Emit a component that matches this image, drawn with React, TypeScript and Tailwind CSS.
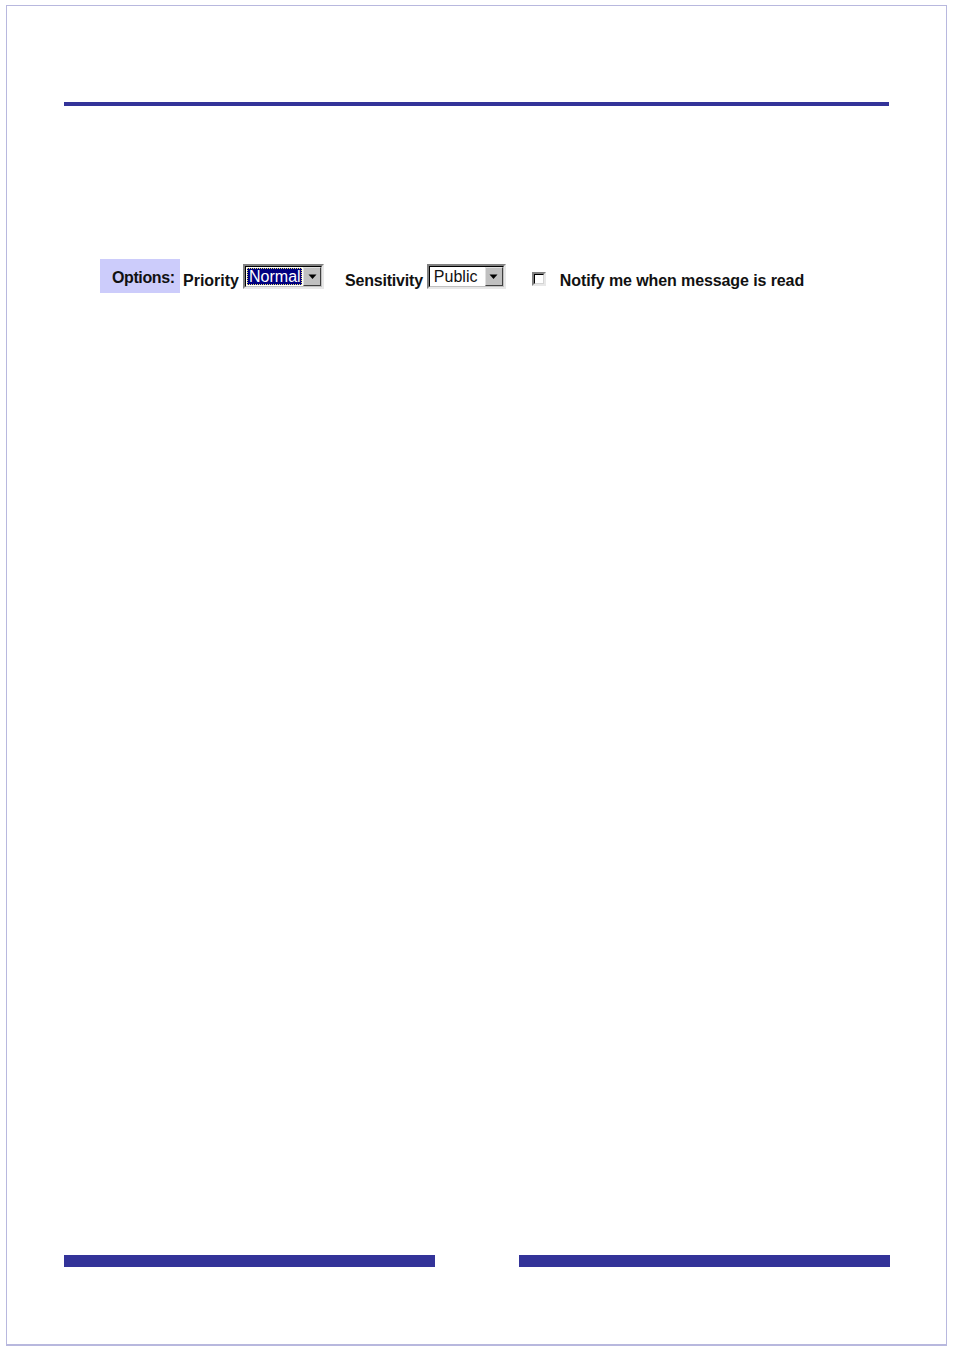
import React from 'react';

function DropButton() {
  return (
    <div className="flex h-full w-[18px] items-center justify-center border border-t-[#e0e0e0] border-l-[#e0e0e0] border-b-[#404040] border-r-[#404040] bg-[#c0c0c0]">
      <svg width="9" height="6" viewBox="0 0 9 6">
        <path d="M0.5 0.5h8L4.5 5z" fill="#000" />
      </svg>
    </div>
  );
}

function FakeSelect({ value, width, focused }: { value: string; width: string; focused?: boolean }) {
  return (
    <div
      className={`flex h-[25px] ${width} items-stretch border-2 border-t-[#808080] border-l-[#808080] border-b-[#e8e8e8] border-r-[#e8e8e8] font-normal`}
    >
      <div className="flex flex-1 items-stretch border border-t-[#000] border-l-[#000] border-b-[#c0c0c0] border-r-[#c0c0c0] bg-white">
        <div className="flex flex-1 items-stretch p-[1px]">
          {focused ? (
            <span className="flex flex-1 items-center border border-dotted border-[#e8e070] bg-[#000080] pl-[1px] text-[16px] leading-none text-white">
              {value}
            </span>
          ) : (
            <span className="flex items-center pl-[3px] text-[16px] leading-none text-[#111]">{value}</span>
          )}
        </div>
        <DropButton />
      </div>
    </div>
  );
}

export default function App() {
  return (
    <div className="min-h-[1351px] bg-white pt-[5px] pl-[6px]" style={{ fontFamily: '"Liberation Sans", Arial, sans-serif' }}>
      <div className="flex h-[1341px] w-[941px] flex-col border border-b-2 border-[#b8b8de]">
        <div className="ml-[57px] mt-[96px] h-[4px] w-[825px] bg-[#333399]" />

        <div className="ml-[93px] mt-[153px] flex items-start text-[16px] leading-[16px] font-bold text-[#111]">
          <div className="h-[34px] w-[80px] bg-[#ccccfb] pl-[12px] pt-[11px] tracking-[-0.4px]">Options:</div>
          <span className="ml-[3px] mt-[14px]">Priority</span>
          <div className="ml-[4px] mt-[5px]">
            <FakeSelect value="Normal" width="w-[81px]" focused />
          </div>
          <span className="ml-[21px] mt-[14px] tracking-[-0.2px]">Sensitivity</span>
          <div className="ml-[4px] mt-[5px]">
            <FakeSelect value="Public" width="w-[79px]" />
          </div>
          <div className="ml-[26px] mt-[13px] h-[14px] w-[14px] border-2 border-t-[#808080] border-l-[#808080] border-b-[#e8e8e8] border-r-[#e8e8e8]">
            <div className="h-full w-full border border-t-[#000] border-l-[#000] border-b-[#d4d4d4] border-r-[#d4d4d4] bg-white" />
          </div>
          <span className="ml-[14px] mt-[14px] tracking-[-0.1px]">Notify me when message is read</span>
        </div>

        <div className="mt-auto mb-[77px] ml-[57px] flex w-[826px] justify-between">
          <div className="h-[12px] w-[371px] bg-[#333399]" />
          <div className="h-[12px] w-[371px] bg-[#333399]" />
        </div>
      </div>
    </div>
  );
}
